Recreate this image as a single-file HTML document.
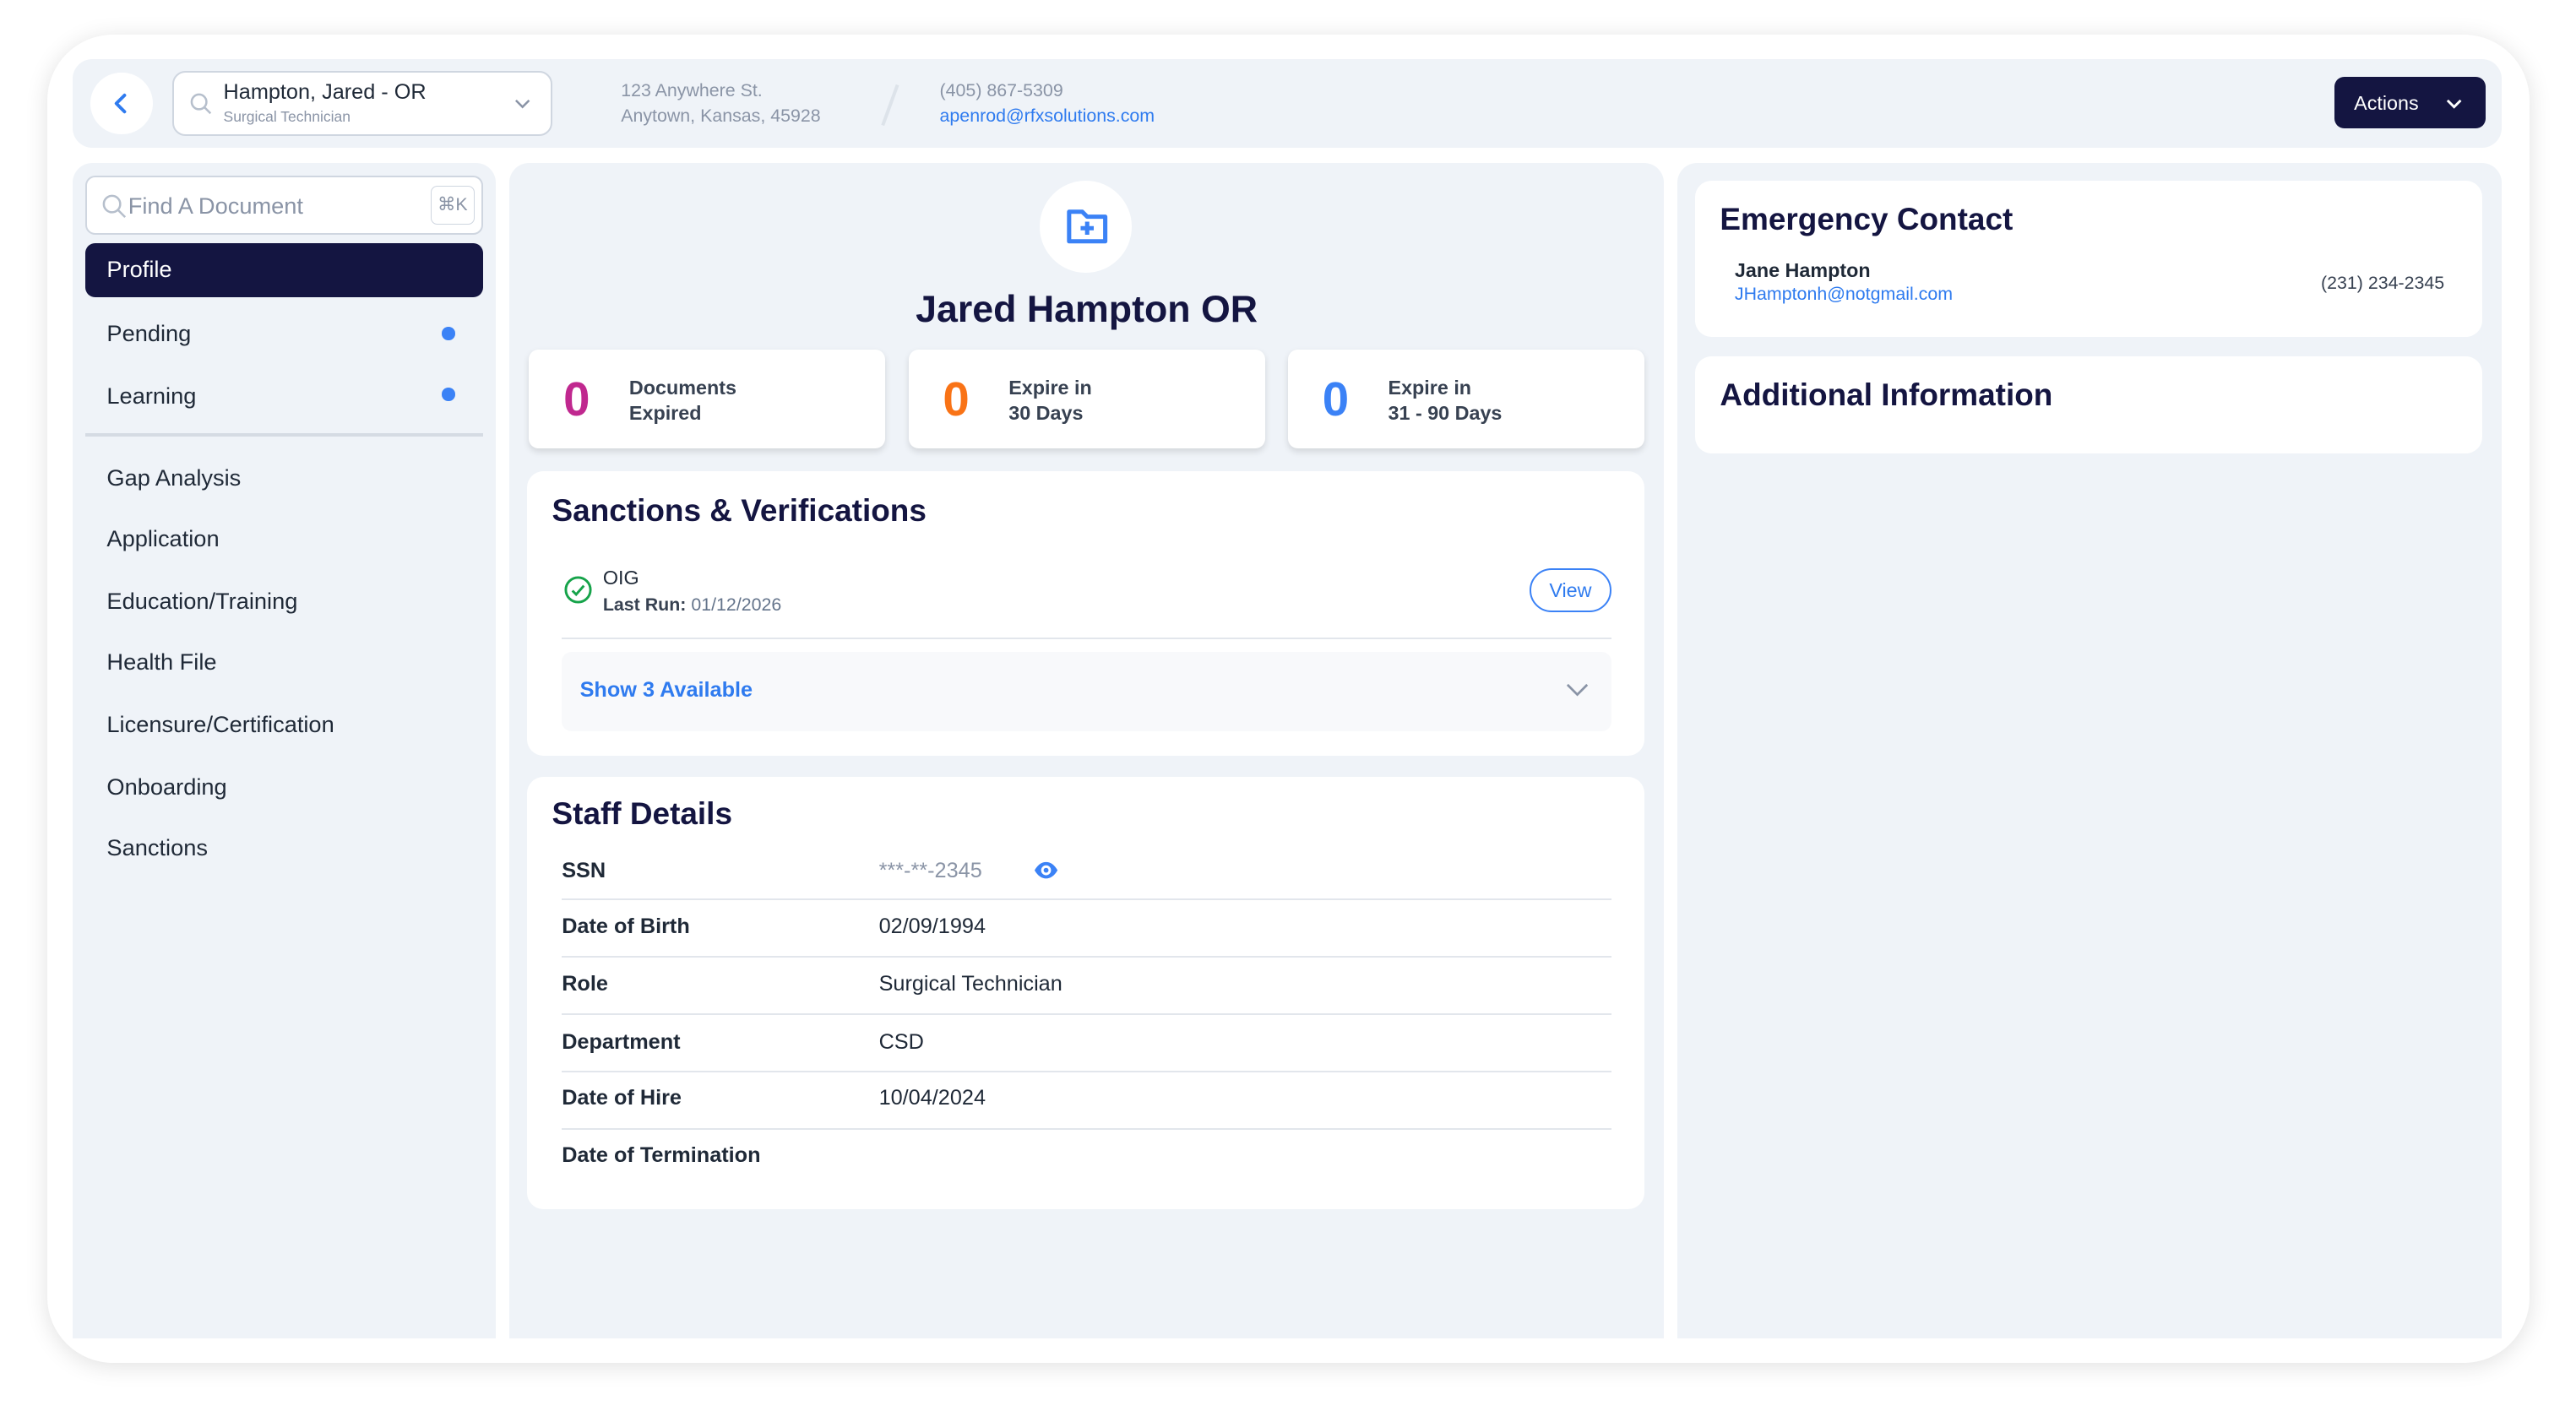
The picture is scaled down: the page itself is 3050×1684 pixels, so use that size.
<!DOCTYPE html>
<html><head><meta charset="utf-8"><style>
*{box-sizing:border-box;margin:0;padding:0}
html,body{width:3050px;height:1684px;overflow:hidden;background:#fff}
#w{zoom:1.945;width:1570px;height:866px;position:relative;font-family:"Liberation Sans",sans-serif;color:#1f2937}
.a{position:absolute}
.outer{left:29px;top:21px;width:1511px;height:809px;background:#fff;border-radius:40px;box-shadow:0 2px 14px rgba(0,0,0,.12)}
.bg{background:#eff3f8}
.card{background:#fff;border-radius:10px}
.h{font-weight:bold;color:#141541}
.side div.i{position:absolute;left:65px;font-size:14px;color:#1f2937}
.row{position:absolute;left:342px;width:639px;font-size:13px}
.row b{position:absolute;left:0;color:#1f2937}
.row span{position:absolute;left:193px;color:#1f2937}
.ln{position:absolute;left:342px;width:639px;height:1px;background:#e2e6ec}
.stat{position:absolute;top:213px;width:217px;height:60px;background:#fff;border-radius:6px;box-shadow:0 2px 4px rgba(0,0,0,.12)}
.stat .n{position:absolute;left:21px;top:13px;font-size:29px;font-weight:bold}
.stat .t{position:absolute;left:61px;top:16px;font-size:12px;font-weight:bold;color:#374151;line-height:15px}
</style></head><body><div id="w">
<div class="a outer"></div>
<div class="a bg" style="left:44px;top:36px;width:1479px;height:54px;border-radius:12px"></div>
<div class="a" style="left:55px;top:44px;width:38px;height:38px;border-radius:50%;background:#fff"></div>
<svg class="a" style="left:66px;top:55px" width="16" height="16" viewBox="0 0 16 16"><path d="M10 3 5 8l5 5" fill="none" stroke="#2f7bef" stroke-width="2" stroke-linecap="round" stroke-linejoin="round"/></svg>
<div class="a" style="left:105px;top:43px;width:231px;height:40px;background:#fff;border:1.5px solid #cfd6e0;border-radius:8px"></div>
<svg class="a" style="left:115px;top:56px" width="14" height="14" viewBox="0 0 14 14"><circle cx="6" cy="6" r="4.5" fill="none" stroke="#b6bfcc" stroke-width="1.3"/><path d="M9.5 9.5 13 13" stroke="#b6bfcc" stroke-width="1.3"/></svg>
<div class="a" style="left:136px;top:49px;font-size:13px;color:#1f2937">Hampton, Jared - OR</div>
<div class="a" style="left:136px;top:66px;font-size:9px;color:#8a94a6">Surgical Technician</div>
<svg class="a" style="left:312px;top:59px" width="12" height="8" viewBox="0 0 12 8"><path d="M2 2l4 4 4-4" fill="none" stroke="#8a94a6" stroke-width="1.3"/></svg>
<div class="a" style="left:378px;top:48px;font-size:11px;color:#8a94a6;line-height:15px">123 Anywhere St.<br>Anytown, Kansas, 45928</div>
<div class="a" style="left:541px;top:51px;width:2px;height:26px;background:#dde3ea;transform:rotate(20deg)"></div>
<div class="a" style="left:572px;top:48px;font-size:11px;color:#8a94a6;line-height:15px">(405) 867-5309<br><span style="color:#2f7bef">apenrod@rfxsolutions.com</span></div>
<div class="a" style="left:1421px;top:47px;width:92px;height:31px;background:#141541;border-radius:6px"></div>
<div class="a" style="left:1433px;top:56px;font-size:12px;color:#fff">Actions</div>
<svg class="a" style="left:1488px;top:59px" width="12" height="8" viewBox="0 0 12 8"><path d="M2 2l4 4 4-4" fill="none" stroke="#fff" stroke-width="1.5"/></svg>

<div class="a bg side" style="left:44px;top:99px;width:258px;height:716px;border-radius:12px 12px 0 0"></div>
<div class="side">
<div class="a" style="left:52px;top:107px;width:242px;height:36px;background:#fff;border:1.5px solid #cfd6e0;border-radius:6px"></div>
<svg class="a" style="left:61px;top:117px" width="16" height="16" viewBox="0 0 16 16"><circle cx="7" cy="7" r="5" fill="none" stroke="#b6bfcc" stroke-width="1.3"/><path d="M10.5 10.5 15 15" stroke="#b6bfcc" stroke-width="1.3"/></svg>
<div class="a" style="left:78px;top:117px;font-size:14px;color:#8a94a6">Find A Document</div>
<div class="a" style="left:262px;top:113px;width:27px;height:24px;border:1px solid #cfd6e0;border-radius:4px;font-size:11px;color:#8a94a6;text-align:center;line-height:22px">⌘K</div>
<div class="a" style="left:52px;top:148px;width:242px;height:33px;background:#141541;border-radius:6px"></div>
<div class="i" style="top:156px;color:#fff">Profile</div>
<div class="i" style="top:195px">Pending</div>
<div class="a" style="left:269px;top:199px;width:8px;height:8px;border-radius:50%;background:#3b82f6"></div>
<div class="i" style="top:233px">Learning</div>
<div class="a" style="left:269px;top:236px;width:8px;height:8px;border-radius:50%;background:#3b82f6"></div>
<div class="a" style="left:52px;top:264px;width:242px;height:2px;background:#d5dbe3"></div>
<div class="i" style="top:283px">Gap Analysis</div>
<div class="i" style="top:320px">Application</div>
<div class="i" style="top:358px">Education/Training</div>
<div class="i" style="top:395px">Health File</div>
<div class="i" style="top:433px">Licensure/Certification</div>
<div class="i" style="top:471px">Onboarding</div>
<div class="i" style="top:508px">Sanctions</div>
</div>

<div class="a bg" style="left:310px;top:99px;width:703px;height:716px;border-radius:12px 12px 0 0"></div>
<div class="a" style="left:633px;top:110px;width:56px;height:56px;border-radius:50%;background:#fff"></div>
<svg class="a" style="left:648px;top:125px" width="28" height="26" viewBox="0 0 28 26"><path d="M3 4h8l3 3h11v15H3z" fill="none" stroke="#3b82f6" stroke-width="2.6" stroke-linejoin="round"/><path d="M14 10v8M10 14h8" stroke="#3b82f6" stroke-width="2.6"/></svg>
<div class="a h" style="left:310px;width:703px;top:176px;font-size:23px;text-align:center">Jared Hampton OR</div>
<div class="stat" style="left:322px"><div class="n" style="color:#c0288f">0</div><div class="t">Documents<br>Expired</div></div>
<div class="stat" style="left:553px"><div class="n" style="color:#f97316">0</div><div class="t">Expire in<br>30 Days</div></div>
<div class="stat" style="left:784px"><div class="n" style="color:#3b82f6">0</div><div class="t">Expire in<br>31 - 90 Days</div></div>

<div class="a card" style="left:321px;top:287px;width:680px;height:173px"></div>
<div class="a h" style="left:336px;top:300px;font-size:19px">Sanctions &amp; Verifications</div>
<svg class="a" style="left:343px;top:350px" width="18" height="18" viewBox="0 0 18 18"><circle cx="9" cy="9" r="7.5" fill="none" stroke="#16a34a" stroke-width="1.5"/><path d="M5.5 9.5l2.3 2.3L12.5 6.5" fill="none" stroke="#16a34a" stroke-width="1.5"/></svg>
<div class="a" style="left:367px;top:345px;font-size:12px;color:#1f2937">OIG</div>
<div class="a" style="left:367px;top:362px;font-size:11px;color:#374151"><b>Last Run:</b> <span style="color:#64748b">01/12/2026</span></div>
<div class="a" style="left:931px;top:346px;width:50px;height:27px;border:1.3px solid #3b82f6;border-radius:14px;font-size:12px;color:#2f7bef;text-align:center;line-height:25px">View</div>
<div class="ln" style="top:388px"></div>
<div class="a" style="left:342px;top:397px;width:639px;height:48px;background:#f8f9fb;border-radius:6px"></div>
<div class="a" style="left:353px;top:413px;font-size:13px;font-weight:bold;color:#2f7bef">Show 3 Available</div>
<svg class="a" style="left:952px;top:415px" width="16" height="10" viewBox="0 0 16 10"><path d="M2 2l6 6 6-6" fill="none" stroke="#8a94a6" stroke-width="1.4"/></svg>

<div class="a card" style="left:321px;top:473px;width:680px;height:263px"></div>
<div class="a h" style="left:336px;top:485px;font-size:19px">Staff Details</div>
<div class="row" style="top:523px"><b>SSN</b><span style="color:#8a94a6">***-**-2345</span></div>
<svg class="a" style="left:629px;top:523px" width="16" height="14" viewBox="0 0 16 14"><path d="M1 7c2-3.5 4.5-5 7-5s5 1.5 7 5c-2 3.5-4.5 5-7 5S3 10.5 1 7z" fill="#3b82f6"/><circle cx="8" cy="7" r="3" fill="#fff"/><circle cx="8" cy="7" r="1.5" fill="#3b82f6"/></svg>
<div class="ln" style="top:547px"></div>
<div class="row" style="top:557px"><b>Date of Birth</b><span>02/09/1994</span></div>
<div class="ln" style="top:582px"></div>
<div class="row" style="top:592px"><b>Role</b><span>Surgical Technician</span></div>
<div class="ln" style="top:617px"></div>
<div class="row" style="top:627px"><b>Department</b><span>CSD</span></div>
<div class="ln" style="top:652px"></div>
<div class="row" style="top:661px"><b>Date of Hire</b><span>10/04/2024</span></div>
<div class="ln" style="top:687px"></div>
<div class="row" style="top:696px"><b>Date of Termination</b></div>

<div class="a bg" style="left:1021px;top:99px;width:502px;height:716px;border-radius:12px 12px 0 0"></div>
<div class="a card" style="left:1032px;top:110px;width:479px;height:95px"></div>
<div class="a h" style="left:1047px;top:123px;font-size:19px">Emergency Contact</div>
<div class="a" style="left:1056px;top:158px;font-size:12px;font-weight:bold;color:#1f2937">Jane Hampton</div>
<div class="a" style="left:1056px;top:173px;font-size:11px;color:#2f7bef">JHamptonh@notgmail.com</div>
<div class="a" style="left:1388px;top:166px;width:100px;text-align:right;font-size:11px;color:#374151">(231) 234-2345</div>
<div class="a card" style="left:1032px;top:217px;width:479px;height:59px"></div>
<div class="a h" style="left:1047px;top:230px;font-size:19px">Additional Information</div>
</div></body></html>
